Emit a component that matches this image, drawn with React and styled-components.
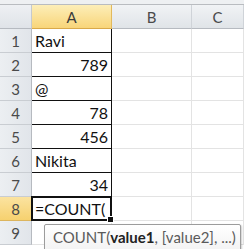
import React from 'react';
import styled, { createGlobalStyle } from 'styled-components';

const GlobalStyle = createGlobalStyle`
  html, body { margin: 0; padding: 0; background: #ffffff; overflow: hidden; }
  body { font-family: Lato, "Open Sans", "Liberation Sans", sans-serif; }
`;

const Page = styled.div`
  position: relative;
  width: 244px;
  height: 249px;
  overflow: hidden;
`;

const TopStrip = styled.div`
  height: 4px;
  background: #eef0f2;
  border-bottom: 1px solid #b9bcc0;
`;

const Sheet = styled.div`
  display: grid;
  grid-template-columns: 32px 80px 80px 1fr;
  grid-auto-rows: 24px;
`;

const Corner = styled.div`
  background: linear-gradient(#eef0f3, #dfe3e8);
  border-right: 1px solid #c5c9ce;
  border-bottom: 1px solid #b6bac0;
`;

const ColHead = styled.div`
  display: flex;
  align-items: center;
  justify-content: center;
  font-size: 15px;
  color: ${({ $active }) => ($active ? '#3c3c3c' : '#4a4a4a')};
  background: ${({ $active }) =>
    $active ? 'linear-gradient(#fdeeb8, #f8d57a)' : 'linear-gradient(#f1f3f5, #e0e4e8)'};
  border-right: 1px solid ${({ $active }) => ($active ? '#e2b95c' : '#cfd3d8')};
  border-bottom: 1px solid ${({ $active }) => ($active ? '#d9a94a' : '#b6bac0')};
  box-sizing: border-box;
`;

const RowHead = styled.div`
  display: flex;
  align-items: center;
  justify-content: center;
  font-size: 15px;
  color: #4a4a4a;
  background: ${({ $active }) =>
    $active ? 'linear-gradient(#fbe3a0, #f6d16f)' : 'linear-gradient(90deg, #eceff2, #e1e5ea)'};
  border-right: 1px solid ${({ $active }) => ($active ? '#d9a94a' : '#b6bac0')};
  border-bottom: 1px solid ${({ $active }) => ($active ? '#dcb55e' : '#c9cdd2')};
  box-sizing: border-box;
`;

const Cell = styled.div`
  position: relative;
  display: flex;
  align-items: center;
  justify-content: ${({ $num }) => ($num ? 'flex-end' : 'flex-start')};
  padding: 0 3px;
  font-size: 16px;
  color: #111;
  box-sizing: border-box;
  white-space: nowrap;
  border-right: 1px solid ${({ $boxed }) => ($boxed ? '#111' : '#e3e3e3')};
  border-bottom: 1px solid ${({ $boxed }) => ($boxed ? '#111' : '#e3e3e3')};
`;

const ActiveCell = styled(Cell)`
  border: 2px solid #111;
  margin: -1px 0 0 -1px;
  padding-left: 2px;
  z-index: 2;
`;

const Caret = styled.span`
  display: inline-block;
  width: 1px;
  height: 19px;
  background: #111;
  margin-left: 3px;
`;

const FillHandle = styled.span`
  position: absolute;
  right: -4px;
  bottom: -4px;
  width: 5px;
  height: 5px;
  background: #111;
  border: 1px solid #fff;
`;

const Tooltip = styled.div`
  position: absolute;
  left: 44px;
  top: 224px;
  width: 197px;
  height: 30px;
  box-sizing: border-box;
  padding: 3px 0 0 8px;
  border: 1px solid #9c9c9c;
  border-radius: 2px;
  background: linear-gradient(#ffffff, #f2f2f2);
  box-shadow: 1px 1px 2px rgba(0, 0, 0, 0.2);
  font-size: 15px;
  color: #5a5a5a;
  white-space: nowrap;
  z-index: 3;
`;

const Arg = styled.b`
  color: #222;
`;

const rows = [
  { a: 'Ravi' },
  { a: '789', num: true },
  { a: '@' },
  { a: '78', num: true },
  { a: '456', num: true },
  { a: 'Nikita' },
  { a: '34', num: true },
];

export default function App() {
  return (
    <Page>
      <GlobalStyle />
      <TopStrip />
      <Sheet>
        <Corner />
        <ColHead $active>A</ColHead>
        <ColHead>B</ColHead>
        <ColHead>C</ColHead>

        {rows.map((r, i) => (
          <React.Fragment key={i}>
            <RowHead>{i + 1}</RowHead>
            <Cell $boxed $num={r.num}>{r.a}</Cell>
            <Cell />
            <Cell />
          </React.Fragment>
        ))}

        <RowHead $active>8</RowHead>
        <ActiveCell>
          =COUNT(<Caret />
          <FillHandle />
        </ActiveCell>
        <Cell />
        <Cell />

        <RowHead>9</RowHead>
        <Cell />
        <Cell />
        <Cell />
      </Sheet>
      <Tooltip>
        COUNT(<Arg>value1</Arg>, [value2], ...)
      </Tooltip>
    </Page>
  );
}
